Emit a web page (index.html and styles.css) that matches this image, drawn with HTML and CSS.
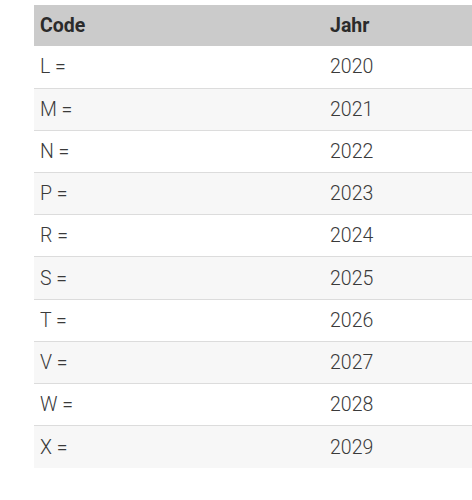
FILE: index.html
```html
<!DOCTYPE html>
<html lang="de">
<head>
<meta charset="utf-8">
<title>Code Jahr</title>
<link rel="stylesheet" href="styles.css">
</head>
<body>
<div class="wrap">
<table class="codes">
<thead>
<tr><th class="c1">Code</th><th class="c2">Jahr</th></tr>
</thead>
<tbody>
<tr><td>L =</td><td>2020</td></tr>
<tr><td>M =</td><td>2021</td></tr>
<tr><td>N =</td><td>2022</td></tr>
<tr><td>P =</td><td>2023</td></tr>
<tr><td>R =</td><td>2024</td></tr>
<tr><td>S =</td><td>2025</td></tr>
<tr><td>T =</td><td>2026</td></tr>
<tr><td>V =</td><td>2027</td></tr>
<tr><td>W =</td><td>2028</td></tr>
<tr><td>X =</td><td>2029</td></tr>
</tbody>
</table>
</div>
</body>
</html>
```
FILE: styles.css
```css
html, body {
  margin: 0;
  padding: 0;
  background: #fff;
  overflow: hidden;
}
.wrap {
  padding: 5px 0 0 34px;
}
.codes {
  border-collapse: collapse;
  width: 460px;
  font-family: Roboto, "Liberation Sans", sans-serif;
  table-layout: fixed;
}
.codes th {
  background: #cbcbcb;
  color: #2b2b2b;
  font-weight: 700;
  font-size: 19.5px;
  text-align: left;
  height: 41px;
  padding: 0 0 0 6px;
  box-sizing: border-box;
}
.codes th.c1 {
  width: 290px;
}
.codes td {
  font-weight: 300;
  font-size: 19.5px;
  color: #3a3a3a;
  height: 42.2px;
  padding: 0 0 0 6px;
  box-sizing: border-box;
  border-top: 1px solid #dcdcdc;
}
.codes tbody tr:first-child td {
  border-top: none;
}
.codes tbody tr:nth-child(even) td {
  background: #f7f7f7;
}
```
